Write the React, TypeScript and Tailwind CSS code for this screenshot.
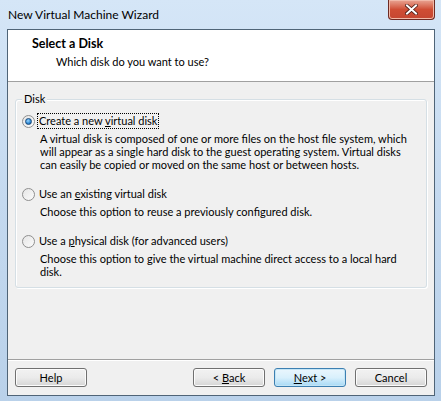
import React from "react";

const FONT = { fontFamily: 'Lato, "Liberation Sans", sans-serif' };

function Radio({ checked }: { checked?: boolean }) {
  return (
    <span className="relative inline-flex h-[13px] w-[13px] shrink-0 items-center justify-center rounded-full border border-[#8f8f8f] bg-gradient-to-br from-[#e6e6e6] to-[#fbfbfb]">
      {checked && (
        <span className="h-[7px] w-[7px] rounded-full border border-[#1a4b7c] bg-[radial-gradient(circle_at_40%_35%,#9ad6ff,#2b86d2_60%,#0d3f7a)]" />
      )}
    </span>
  );
}

function Option({
  label,
  desc,
  checked,
  focus,
}: {
  label: React.ReactNode;
  desc: string;
  checked?: boolean;
  focus?: boolean;
}) {
  return (
    <div className="flex flex-col">
      <div className="flex items-center gap-[3px]">
        <Radio checked={checked} />
        <span className={focus ? "px-[1px] leading-[14px] outline outline-1 outline-dotted outline-black" : "px-[1px] leading-[14px]"}>{label}</span>
      </div>
      <p className="mt-[4px] pl-[18px] pr-[8px] leading-[13px]">{desc}</p>
    </div>
  );
}

function Btn({ children, def }: { children: React.ReactNode; def?: boolean }) {
  return (
    <button
      className={`h-[19px] w-[72px] rounded-[3px] border text-[11px] leading-none text-black bg-gradient-to-b ${
        def
          ? "border-[#3c7fb1] from-[#eaf6fd] via-[#d9f0fc] to-[#a7d9f5] shadow-[inset_0_0_0_1px_#c4e5f6]"
          : "border-[#707070] from-[#f2f2f2] via-[#ebebeb] to-[#d5d5d5] shadow-[inset_0_0_0_1px_#fcfcfc]"
      }`}
    >
      {children}
    </button>
  );
}

export default function App() {
  return (
    <div
      className="flex h-[401px] w-[441px] flex-col bg-gradient-to-b from-[#d5e6f7] via-[#c4d9ef] to-[#b9d1ea] text-[11px] text-black"
      style={FONT}
    >
      {/* title bar */}
      <div className="relative flex h-[29px] shrink-0 items-center pl-[8px] text-[12px] text-black">
        New Virtual Machine Wizard
        <div className="absolute right-[6px] top-0 flex h-[20px] w-[47px] items-center justify-center rounded-b-[4px] border border-t-0 border-[#6d2a23] bg-gradient-to-b from-[#e8a493] via-[#cf4d34] to-[#c54631] shadow-[inset_0_0_0_1px_#f1b9a8]">
          <svg width="13" height="11" viewBox="0 0 13 11">
            <path d="M2 1.5 L11 9.5 M11 1.5 L2 9.5" stroke="#4a1b14" strokeWidth="3.6" strokeLinecap="square" />
            <path d="M2 1.5 L11 9.5 M11 1.5 L2 9.5" stroke="#fff" strokeWidth="2" strokeLinecap="square" />
          </svg>
        </div>
      </div>

      {/* client */}
      <div className="ml-[7px] flex h-[367px] w-[428px] flex-col border border-[#4f6477] bg-[#f0f0f0]">
        <div className="h-[52px] shrink-0 border-b border-[#a0a0a0] bg-white pl-[24px] pt-[7px]">
          <div className="text-[12.5px] font-bold leading-[14px]">Select a Disk</div>
          <div className="mt-[4px] pl-[24px] leading-[14px]">Which disk do you want to use?</div>
        </div>

        <div className="flex-1 px-[7px] pt-[17px]">
          <div className="relative h-[189px] rounded-[3px] border border-[#d5dfe5] shadow-[1px_1px_0_#fff,inset_1px_1px_0_#fff] px-[6px] pt-[14px]">
            <span className="absolute -top-[8px] left-[6px] bg-[#f0f0f0] px-[2px] leading-[14px]">Disk</span>
            <div className="flex flex-col gap-[16px]">
              <Option
                checked
                focus
                label={
                  <>
                    Create a new <u>v</u>irtual disk
                  </>
                }
                desc="A virtual disk is composed of one or more files on the host file system, which will appear as a single hard disk to the guest operating system. Virtual disks can easily be copied or moved on the same host or between hosts."
              />
              <Option
                label={
                  <>
                    Use an <u>e</u>xisting virtual disk
                  </>
                }
                desc="Choose this option to reuse a previously configured disk."
              />
              <Option
                label={
                  <>
                    Use a <u>p</u>hysical disk (for advanced users)
                  </>
                }
                desc="Choose this option to give the virtual machine direct access to a local hard disk."
              />
            </div>
          </div>
        </div>

        <div className="flex h-[36px] shrink-0 items-center border-t border-[#a0a0a0] px-[7px] shadow-[inset_0_1px_0_#fff]">
          <Btn>Help</Btn>
          <div className="ml-auto flex gap-[9px]">
            <Btn>
              &lt; <u>B</u>ack
            </Btn>
            <Btn def>
              <u>N</u>ext &gt;
            </Btn>
            <Btn>Cancel</Btn>
          </div>
        </div>
      </div>
    </div>
  );
}
